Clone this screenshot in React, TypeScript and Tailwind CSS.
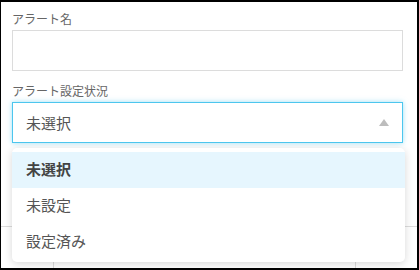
import React, { useState } from 'react';

const OPTIONS = ['未選択', '未設定', '設定済み'];

const App: React.FC = () => {
  const [selected] = useState('未選択');

  return (
    <div
      className="relative h-[270px] w-[419px] overflow-hidden border-t-2 border-l border-r-2 border-b-2 border-black bg-white text-[#555]"
      style={{ fontFamily: '"Noto Sans CJK JP", "Noto Sans", sans-serif' }}
    >
      <div className="px-[11px] pt-[7.5px]">
        <label className="mb-[2px] block text-[12px] leading-[18px] text-[#666]">アラート名</label>
        <input
          type="text"
          className="block h-[41px] w-[391px] border border-[#dcdcdc] bg-white px-3 outline-none"
        />

        <label className="mt-[11px] mb-[2px] block text-[12px] leading-[18px] text-[#666]">アラート設定状況</label>
        <div className="relative">
          <div className="flex h-[41px] w-[391px] items-center justify-between border border-[#4cc6ee] bg-white pl-[13px] pr-[13px] shadow-[0_0_5px_rgba(76,198,238,0.55)]">
            <span className="text-[15px] leading-none text-[#555]">{selected}</span>
            <svg width="10" height="7" viewBox="0 0 10 7">
              <polygon points="5,0 10,7 0,7" fill="#bdbdbd" />
            </svg>
          </div>

          {/* open dropdown menu */}
          <ul className="absolute left-0 top-[46px] z-10 w-[393px] rounded-[5px] bg-white pt-[4px] pb-[2px] shadow-[0_2px_8px_rgba(0,0,0,0.16)]">
            {OPTIONS.map((opt) => (
              <li
                key={opt}
                className={
                  opt === selected
                    ? 'flex h-[36px] items-center bg-[#e6f6fe] pl-[14px] text-[15px] font-bold text-[#444]'
                    : 'flex h-[36px] items-center pl-[14px] text-[15px] text-[#555]'
                }
              >
                {opt}
              </li>
            ))}
          </ul>
        </div>
      </div>

      {/* table underneath, mostly hidden by the menu */}
      <div className="mt-[83px] grid h-[60px] grid-cols-[53px_302px_1fr] border-t border-[#dcdcdc]">
        <div className="border-r border-[#dcdcdc]" />
        <div className="border-r border-[#dcdcdc]" />
        <div />
      </div>
    </div>
  );
};

export default App;
